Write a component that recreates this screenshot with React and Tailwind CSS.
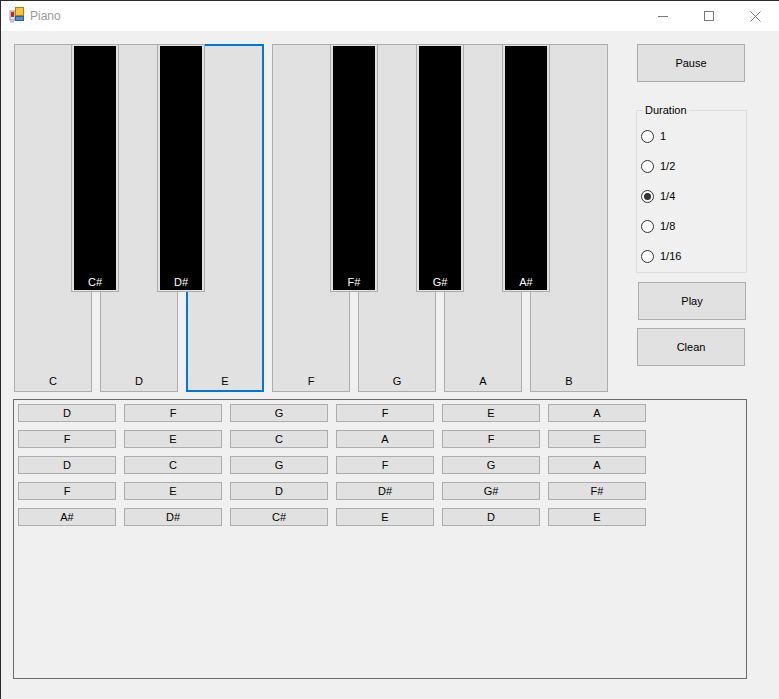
import { useState } from "react";

const whiteKeys = ["C", "D", "E", "F", "G", "A", "B"];

// left offsets inside the keyboard, in px
const blackKeys = [
  { note: "C#", left: "left-[57px]" },
  { note: "D#", left: "left-[143px]" },
  { note: "F#", left: "left-[316px]" },
  { note: "G#", left: "left-[402px]" },
  { note: "A#", left: "left-[488px]" },
];

const durations = ["1", "1/2", "1/4", "1/8", "1/16"];

const melody = [
  ["D", "F", "G", "F", "E", "A"],
  ["F", "E", "C", "A", "F", "E"],
  ["D", "C", "G", "F", "G", "A"],
  ["F", "E", "D", "D#", "G#", "F#"],
  ["A#", "D#", "C#", "E", "D", "E"],
];

function AppIcon() {
  return (
    <svg width="16" height="16" viewBox="0 0 16 16">
      <rect x="1" y="4" width="5" height="9" fill="#e8e8e8" stroke="#9a9a9a" strokeWidth="1" />
      <rect x="2" y="5" width="3" height="5" fill="#c62828" />
      <rect x="6.5" y="0.5" width="8" height="8" fill="#f7c531" stroke="#b7791f" strokeWidth="1" />
      <rect x="6.5" y="9.5" width="8" height="4" fill="#4a8fe0" stroke="#2b5fa8" strokeWidth="1" />
      <rect x="1" y="14" width="4" height="1.5" fill="#bdbdbd" />
    </svg>
  );
}

function WinButton({ children, className = "" }) {
  return (
    <button
      className={`flex items-center justify-center border border-[#adadad] bg-[#e1e1e1] text-[11px] leading-[14px] text-black ${className}`}
    >
      {children}
    </button>
  );
}

export default function App() {
  const [duration, setDuration] = useState("1/4");

  return (
    <div
      className="w-[779px] h-[699px] bg-[#f0f0f0] border-l border-t border-[#2b2b2b] flex flex-col overflow-hidden"
      style={{ fontFamily: '"Liberation Sans", Arial, sans-serif' }}
    >
      {/* Title bar */}
      <div className="h-[30px] bg-white flex items-center shrink-0">
        <div className="ml-[8px] mt-[-2px]">
          <AppIcon />
        </div>
        <span className="ml-[5px] text-[12px] text-[#999999]">Piano</span>
        <div className="ml-auto flex items-center h-full text-[#7a7a7a]">
          <div className="w-[46px] h-full flex items-center justify-center">
            <svg width="10" height="10" viewBox="0 0 10 10">
              <line x1="0" y1="5.5" x2="10" y2="5.5" stroke="currentColor" strokeWidth="1" />
            </svg>
          </div>
          <div className="w-[46px] h-full flex items-center justify-center">
            <svg width="10" height="10" viewBox="0 0 10 10">
              <rect x="0.5" y="0.5" width="9" height="9" fill="none" stroke="currentColor" strokeWidth="1" />
            </svg>
          </div>
          <div className="w-[46px] h-full flex items-center justify-center mr-[1px]">
            <svg width="11" height="11" viewBox="0 0 11 11">
              <path d="M0.5 0.5 L10.5 10.5 M10.5 0.5 L0.5 10.5" stroke="currentColor" strokeWidth="1" />
            </svg>
          </div>
        </div>
      </div>

      {/* Top row: keyboard + controls */}
      <div className="flex items-start mt-[13px]">
        <div className="relative ml-[13px] flex gap-[8px] h-[348px]">
          {whiteKeys.map((k) => (
            <div
              key={k}
              className={`w-[78px] h-full flex flex-col justify-end items-center bg-[#e1e1e1] text-[11px] leading-[14px] text-black ${
                k === "E" ? "border-2 border-[#0078d7] pb-[2px]" : "border border-[#adadad] pb-[3px]"
              }`}
            >
              {k}
            </div>
          ))}

          {blackKeys.map((b) => (
            <div
              key={b.note}
              className={`absolute top-0 ${b.left} w-[48px] h-[248px] border border-[#adadad] bg-[#e1e1e1] px-[2px] py-[1px]`}
            >
              <div className="w-full h-full bg-black flex flex-col justify-end items-center text-white text-[11px] leading-[14px] pb-[1px]">
                {b.note}
              </div>
            </div>
          ))}
        </div>

        <div className="ml-[28px] flex flex-col items-start">
          <WinButton className="w-[108px] h-[38px] ml-[1px]">Pause</WinButton>

          <fieldset className="mt-[21px] w-[111px] border border-[#dcdcdc] pb-[1px]">
            <legend className="ml-[6px] px-[2px] text-[11px] leading-[14px] text-black">Duration</legend>
            <div className="flex flex-col pt-[4px]">
              {durations.map((d) => (
                <label
                  key={d}
                  className="h-[30px] flex items-center cursor-default"
                  onClick={() => setDuration(d)}
                >
                  <span className="ml-[4px] w-[13px] h-[13px] rounded-full border border-[#333333] bg-white flex items-center justify-center">
                    {duration === d && <span className="w-[7px] h-[7px] rounded-full bg-[#333333]" />}
                  </span>
                  <span className="ml-[6px] text-[11px] leading-[14px] text-black">{d}</span>
                </label>
              ))}
            </div>
          </fieldset>

          <WinButton className="w-[108px] h-[38px] mt-[9px] ml-[2px]">Play</WinButton>
          <WinButton className="w-[108px] h-[38px] mt-[8px] ml-[1px]">Clean</WinButton>
        </div>
      </div>

      {/* Melody panel */}
      <div className="ml-[12px] mt-[7px] w-[734px] h-[280px] border border-[#6b6b6b] pt-[4px] pl-[4px]">
        <div className="grid grid-cols-[repeat(6,98px)] gap-x-[8px] gap-y-[8px]">
          {melody.flat().map((n, i) => (
            <WinButton key={i} className="w-[98px] h-[18px]">
              {n}
            </WinButton>
          ))}
        </div>
      </div>
    </div>
  );
}
